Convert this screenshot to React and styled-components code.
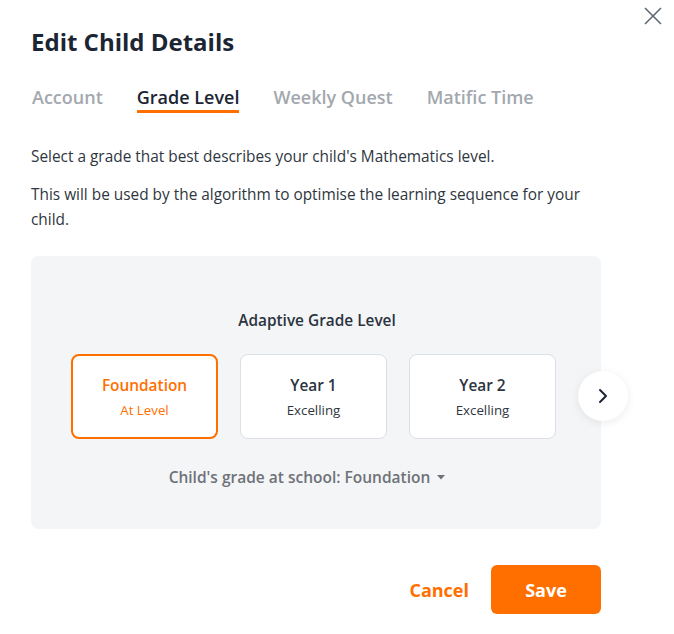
import React from "react";
import styled, { createGlobalStyle } from "styled-components";

const Global = createGlobalStyle`
  html, body { margin: 0; padding: 0; background: #fff; }
  body { font-family: "Open Sans", "Noto Sans", sans-serif; color: #1f2a37; }
  * { box-sizing: border-box; }
`;

const Modal = styled.div`
  position: relative;
  width: 674px;
  height: 634px;
  padding: 26px 73px 0 31px;
  display: flex;
  flex-direction: column;
`;

const Close = styled.button`
  position: absolute;
  top: 7px;
  right: 12px;
  width: 18px;
  height: 18px;
  padding: 0;
  border: 0;
  background: none;
  cursor: pointer;
`;

const Title = styled.h1`
  margin: 0;
  font-size: 24px;
  line-height: 32px;
  font-weight: 700;
  color: #1b2533;
`;

const Tabs = styled.div`
  display: flex;
  gap: 34px;
  margin-top: 27px;
  padding-left: 1px;
`;

const Tab = styled.div`
  font-size: 18px;
  font-weight: 600;
  line-height: 24px;
  padding-bottom: 1px;
  color: ${p => (p.$active ? "#1b2533" : "#a3a8ae")};
  border-bottom: 3px solid ${p => (p.$active ? "#ff6f00" : "transparent")};
`;

const Para = styled.p`
  margin: 0;
  font-size: 15.4px;
  line-height: 25px;
  color: #2f3640;
  margin-top: ${p => p.$mt || 0}px;
`;

const Panel = styled.div`
  position: relative;
  margin-top: 24px;
  height: 273px;
  background: #f4f5f7;
  border-radius: 8px;
  display: flex;
  flex-direction: column;
  align-items: center;
  padding-top: 53px;
`;

const PanelTitle = styled.div`
  font-size: 15.4px;
  font-weight: 600;
  line-height: 24px;
  color: #2b3440;
  padding-left: 2px;
`;

const Cards = styled.div`
  display: flex;
  gap: 22px;
  margin-top: 21px;
  margin-right: 5px;
`;

const Card = styled.div`
  width: 147px;
  height: 85px;
  background: #fff;
  border-radius: 8px;
  border: ${p => (p.$selected ? "2px solid #ff6f00" : "1px solid #dcdfe3")};
  display: flex;
  flex-direction: column;
  align-items: center;
  justify-content: center;
  gap: 4px;
`;

const CardTitle = styled.div`
  font-size: 15.4px;
  font-weight: 600;
  line-height: 22px;
  color: ${p => (p.$selected ? "#ff6f00" : "#2b3440")};
`;

const CardSub = styled.div`
  font-size: 13.3px;
  line-height: 18px;
  color: ${p => (p.$selected ? "#ff6f00" : "#2f3640")};
`;

const NextBtn = styled.button`
  position: absolute;
  left: 547px;
  top: 115px;
  width: 50px;
  height: 50px;
  border-radius: 50%;
  border: 0;
  background: #fff;
  box-shadow: 0 2px 10px rgba(0, 0, 0, 0.08);
  display: flex;
  align-items: center;
  justify-content: center;
  padding: 0;
  cursor: pointer;
`;

const GradeSelect = styled.div`
  margin-top: 26px;
  margin-right: 18px;
  display: flex;
  align-items: center;
  gap: 7px;
  font-size: 15.5px;
  font-weight: 600;
  line-height: 24px;
  color: #6e7278;
`;

const Footer = styled.div`
  margin-top: 36px;
  display: flex;
  justify-content: flex-end;
  align-items: center;
  gap: 22px;
`;

const CancelBtn = styled.button`
  border: 0;
  background: none;
  padding: 0;
  font-family: inherit;
  font-size: 18px;
  font-weight: 700;
  color: #ff6f00;
  cursor: pointer;
`;

const SaveBtn = styled.button`
  width: 110px;
  height: 49px;
  border: 0;
  border-radius: 6px;
  background: #ff6f00;
  color: #fff;
  font-family: inherit;
  font-size: 18px;
  font-weight: 700;
  cursor: pointer;
`;

const grades = [
  { name: "Foundation", status: "At Level", selected: true },
  { name: "Year 1", status: "Excelling" },
  { name: "Year 2", status: "Excelling" },
];

export default function App() {
  return (
    <>
      <Global />
      <Modal>
        <Close aria-label="Close">
          <svg width="18" height="18" viewBox="0 0 18 18">
            <path d="M1 1L17 17M17 1L1 17" stroke="#5f6870" strokeWidth="1.6" fill="none" />
          </svg>
        </Close>
        <Title>Edit Child Details</Title>
        <Tabs>
          <Tab>Account</Tab>
          <Tab $active>Grade Level</Tab>
          <Tab>Weekly Quest</Tab>
          <Tab>Matific Time</Tab>
        </Tabs>
        <Para $mt={31}>Select a grade that best describes your child's Mathematics level.</Para>
        <Para $mt={13}>
          This will be used by the algorithm to optimise the learning sequence for your child.
        </Para>
        <Panel>
          <PanelTitle>Adaptive Grade Level</PanelTitle>
          <Cards>
            {grades.map(g => (
              <Card key={g.name} $selected={g.selected}>
                <CardTitle $selected={g.selected}>{g.name}</CardTitle>
                <CardSub $selected={g.selected}>{g.status}</CardSub>
              </Card>
            ))}
          </Cards>
          <NextBtn aria-label="Next">
            <svg width="12" height="16" viewBox="0 0 12 16">
              <path d="M3 2L9 8L3 14" stroke="#1b2533" strokeWidth="2" fill="none" strokeLinecap="round" strokeLinejoin="round" />
            </svg>
          </NextBtn>
          <GradeSelect>
            Child's grade at school: Foundation
            <svg width="8" height="5" viewBox="0 0 8 5">
              <path d="M0 0H8L4 4.5Z" fill="#6e7278" />
            </svg>
          </GradeSelect>
        </Panel>
        <Footer>
          <CancelBtn>Cancel</CancelBtn>
          <SaveBtn>Save</SaveBtn>
        </Footer>
      </Modal>
    </>
  );
}
